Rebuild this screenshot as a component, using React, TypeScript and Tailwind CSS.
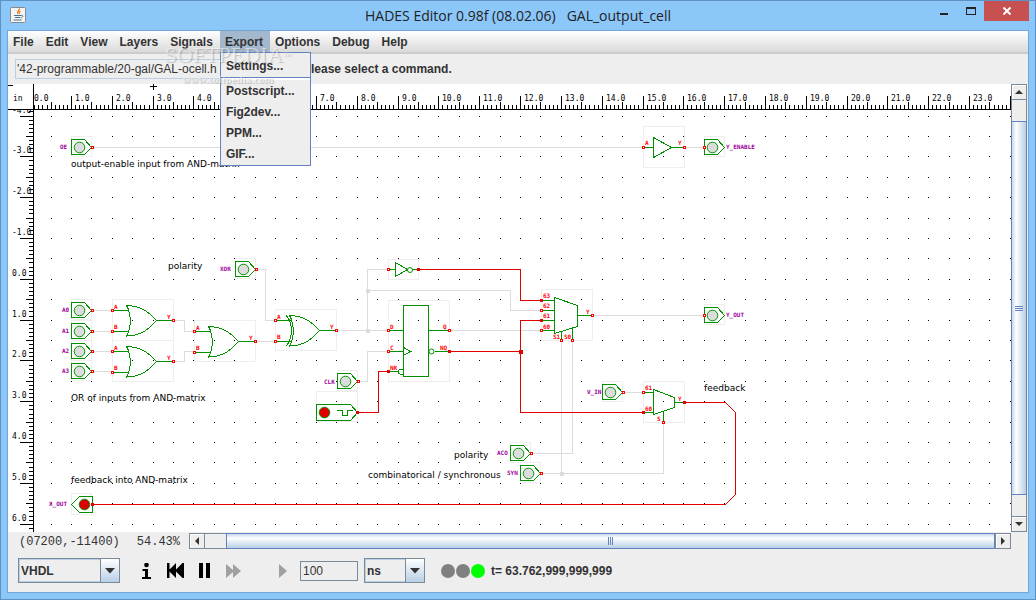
import React, { useState } from 'react';

const MENUS = ['File', 'Edit', 'View', 'Layers', 'Signals', 'Export', 'Options', 'Debug', 'Help'];
const EXPORT_ITEMS = ['Postscript...', 'Fig2dev...', 'PPM...', 'GIF...'];

const GREEN = '#009000';
const LOW = '#dcdcdc';
const HIGH = '#e00000';

// grid: one inch is 40.82px at 54.43% zoom
const gx = (u: number) => Math.floor(30.7 + 40.82 * u);
const gy = (u: number) => Math.floor(279.3 + 40.82 * u);
const range = (from: number, to: number) =>
  Array.from({ length: to - from + 1 }, (_, i) => from + i);

function Grid() {
  return (
    <g fill="#000">
      {range(-8, 12).map((r) =>
        range(1, 48).map((c) => (
          <rect key={`${r}:${c}`} x={gx(c / 2)} y={gy(r / 2)} width="1" height="1" />
        )),
      )}
    </g>
  );
}

function Rulers() {
  return (
    <g fill="#000" fontFamily='"DejaVu Sans Mono", monospace' fontSize="8">
      {range(-41, 61).map((t) => {
        const w = t % 10 === 0 ? 13 : t % 5 === 0 ? 7 : 4;
        return <rect key={t} x={33 - w} y={gy(t / 10)} width={w} height="1" />;
      })}
      {range(-4, 6).map((n) => (
        <text key={n} x="12" y={gy(n) - 3}>
          {n.toFixed(1)}
        </text>
      ))}
      <rect x="8" y="84" width="1020" height="25" fill="#fff" />
      {range(1, 240).map((t) => {
        const h = t % 10 === 0 ? 13 : t % 5 === 0 ? 7 : 4;
        return <rect key={t} x={gx(t / 10)} y={109 - h} width="1" height={h} />;
      })}
      {range(0, 23).map((n) => (
        <text key={n} x={gx(n) + 4} y="101">
          {n.toFixed(1)}
        </text>
      ))}
      <text x="13" y="101">
        in
      </text>
      <rect x="8" y="109" width="1020" height="1" />
      <rect x="33" y="84" width="1" height="460" />
      <rect x="8" y="85" width="5" height="1" />
      <rect x="150" y="86" width="7" height="1" />
      <rect x="153" y="84" width="1" height="6" />
    </g>
  );
}

function Bounds({ x, y, w, h }: { x: number; y: number; w: number; h: number }) {
  return <rect x={x + 0.5} y={y + 0.5} width={w} height={h} fill="none" stroke="#eee" />;
}

function Port({ x, y, high }: { x: number; y: number; high?: boolean }) {
  return (
    <rect
      x={x - 0.5}
      y={y - 0.5}
      width="2"
      height="2"
      fill={high ? '#f00' : '#fff'}
      stroke={high ? '#e00000' : '#f00'}
    />
  );
}

function Wire({ d, high }: { d: string; high?: boolean }) {
  return <path d={d} fill="none" stroke={high ? HIGH : LOW} />;
}

function Junction({ x, y, high }: { x: number; y: number; high?: boolean }) {
  return <rect x={x - 1} y={y - 1} width="4" height="4" fill={high ? HIGH : LOW} />;
}

function Pin({ x, y, children }: { x: number; y: number; children: string }) {
  return (
    <text x={x} y={y} fill="#f00" fontSize="6" fontWeight="bold">
      {children}
    </text>
  );
}

function Name({ x, y, children }: { x: number; y: number; children: string }) {
  return (
    <text x={x} y={y} fill="#a000a0" fontSize="6" fontWeight="bold">
      {children}
    </text>
  );
}

function Lamp({ x, y, fill }: { x: number; y: number; fill: string }) {
  return <circle cx={x} cy={y} r="5.3" fill={fill} stroke={GREEN} shapeRendering="auto" />;
}

/** Input or output connector; x is its left edge, y its centre line. */
function Pad({ x, y, out }: { x: number; y: number; out?: boolean }) {
  return (
    <g>
      <Bounds x={x} y={y - 11} w={20} h={20} />
      <path d={`M${x + 0.5} ${y - 7.5}h13l7 8l-7 7h-13z`} fill="#fff" stroke={GREEN} />
      <Lamp x={x + 8.5} y={y + 0.5} fill={LOW} />
      <Port x={out ? x : x + 21} y={y} />
    </g>
  );
}

function OrGate({ x, y, xor }: { x: number; y: number; xor?: boolean }) {
  return (
    <g fill="none" stroke={GREEN}>
      <Bounds x={x} y={y - 21} w={61} h={41} />
      <path
        d={`M${x + 14.5} ${y - 14.5}C${x + 29} ${y - 14} ${x + 37} ${y - 8} ${x + 44.5} ${y + 0.5}C${x + 37} ${y + 9} ${x + 29} ${y + 16} ${x + 14.5} ${y + 16}C${x + 19.5} ${y + 8} ${x + 19.5} ${y - 6} ${x + 14.5} ${y - 14.5}`}
      />
      {xor && <path d={`M${x + 11} ${y - 14.5}q5 4 5.5 15q-.5 11 -5.5 15.5`} />}
      <path d={`M${x} ${y - 9.5}h16M${x} ${y + 11.5}h16M${x + 44} ${y + 0.5}h17`} />
      <Port x={x} y={y - 10} />
      <Port x={x} y={y + 11} />
      <Port x={x + 61} y={y} />
      <g stroke="none">
        <Pin x={x + 2} y={y - 11}>A</Pin>
        <Pin x={x + 2} y={y + 9}>B</Pin>
        <Pin x={x + 55} y={y - 1}>Y</Pin>
      </g>
    </g>
  );
}

function Gates() {
  return (
    <g fill="none" stroke={GREEN}>
      <OrGate x={112} y={320} />
      <OrGate x={112} y={361} />
      <OrGate x={194} y={341} />
      <OrGate x={275} y={330} xor />

      {/* output-enable buffer */}
      <Bounds x={643} y={126} w={41} h={41} />
      <path d="M643 147.5h10.5M653.5 137.5v20l18 -10zM671 147.5h13" />
      {/* inverter */}
      <Bounds x={388} y={259} w={30} h={20} />
      <path d="M388 269.5h7M395.5 262.5v14l12 -7zM413 269.5h5" />
      <circle cx="410" cy="270" r="2.5" shapeRendering="auto" />

      {/* flip-flop */}
      <Bounds x={388} y={300} w={61} h={81} />
      <rect x="403.5" y="305.5" width="25" height="71" />
      <path d="M388 330.5h15M388 351.5h15M388 371.5h10M428 330.5h21M435 351.5h14" />
      <path d="M403.5 347.5l7 4l-7 4M403 369q-5 0 -5 2.5q0 3 5 3" />
      <circle cx="431.5" cy="351.5" r="2.5" fill="#fff" shapeRendering="auto" />

      {/* reset pulse source */}
      <Bounds x={316} y={391} w={41} h={30} />
      <path d="M316.5 404.5h34l7 8l-7 8h-34z" fill="#fff" />
      <Lamp x={324.5} y={412.5} fill={HIGH} />
      <path d="M337 410.5h5.5v5h5v-5h5.5" />

      {/* output multiplexer */}
      <Bounds x={541} y={289} w={51} h={51} />
      <path d="M554.5 297.5l23 8v21l-23 7zM541 300.5h13M541 310.5h13M541 320.5h13M541 330.5h13" />
      <path d="M577 315.5h15M561.5 331v9M572.5 328v12" />

      {/* feedback multiplexer */}
      <Bounds x={643} y={381} w={41} h={41} />
      <path d="M653.5 389.5l21 8v10l-21 7zM643 392.5h10M643 412.5h10M674 402.5h10M663.5 412v10" />
    </g>
  );
}

function Wires() {
  return (
    <g>
      <Wire d="M92 147.5H643M684 147.5H704" />
      <Wire d="M92 310.5H112M92 331.5H112M92 351.5H112M92 371.5H112" />
      <Wire d="M173 320.5H184.5V331.5H194M173 361.5H184.5V351.5H194M256 341.5H275" />
      <Wire d="M256 269.5H265.5V320.5H275M337 330.5H388M367.5 330.5V269.5H388" />
      <Wire d="M367.5 290.5H510.5V310.5H541M449 330.5H541M358 381.5H367.5V351.5H388" />
      <Wire d="M592 315.5H704M561.5 340V473.5M572.5 340V453.5H531" />
      <Wire d="M541 473.5H663.5V422M623 392.5H643" />
      <Wire high d="M418 269.5H520.5V300.5H541M449 351.5H520.5M541 320.5H520.5V412.5H643" />
      <Wire high d="M357 412.5H378.5V371.5H388" />
      <Wire high d="M684 402.5H725.5L735.5 412.5V494.5L725.5 504.5H92" />
      <Junction x={367} y={290} />
      <Junction x={367} y={330} />
      <Junction x={561} y={473} />
      <Junction x={520} y={351} high />
    </g>
  );
}

function Labels() {
  return (
    <g>
      <Name x={60} y={149}>OE</Name>
      <Name x={62} y={312}>A0</Name>
      <Name x={62} y={333}>A1</Name>
      <Name x={62} y={353}>A2</Name>
      <Name x={62} y={373}>A3</Name>
      <Name x={220} y={271}>XOR</Name>
      <Name x={324} y={384}>CLK</Name>
      <Name x={497} y={455}>ACO</Name>
      <Name x={507} y={475}>SYN</Name>
      <Name x={587} y={394}>V_IN</Name>
      <Name x={726} y={317}>Y_OUT</Name>
      <Name x={726} y={149}>Y_ENABLE</Name>
      <Name x={49} y={506}>X_OUT</Name>
      <Pin x={645} y={145}>A</Pin>
      <Pin x={678} y={145}>Y</Pin>
      <Pin x={390} y={329}>D</Pin>
      <Pin x={390} y={350}>C</Pin>
      <Pin x={390} y={370}>NR</Pin>
      <Pin x={443} y={329}>Q</Pin>
      <Pin x={440} y={350}>NQ</Pin>
      <Pin x={543} y={298}>63</Pin>
      <Pin x={543} y={308}>62</Pin>
      <Pin x={543} y={318}>61</Pin>
      <Pin x={543} y={329}>60</Pin>
      <Pin x={553} y={339}>S1</Pin>
      <Pin x={564} y={339}>S0</Pin>
      <Pin x={586} y={314}>Y</Pin>
      <Pin x={645} y={390}>61</Pin>
      <Pin x={645} y={411}>60</Pin>
      <Pin x={657} y={421}>S</Pin>
      <Pin x={678} y={401}>Y</Pin>
    </g>
  );
}

const PADS = [
  [71, 147], [71, 310], [71, 331], [71, 351], [71, 371], [235, 269],
  [337, 381], [510, 453], [520, 473], [602, 392],
];
const HIGH_PORTS = [
  [92, 504], [418, 269], [388, 371], [357, 412], [541, 300], [541, 320],
  [449, 351], [643, 412], [684, 402],
];
const LOW_PORTS = [
  [643, 147], [684, 147], [388, 269], [388, 330], [388, 351], [449, 330], [541, 310],
  [541, 330], [592, 315], [561, 340], [572, 340], [643, 392], [663, 422],
];

function Schematic() {
  return (
    <svg className="block h-full w-full bg-white" role="img" aria-label="GAL output cell schematic">
      <g transform="translate(-8 -84)" fontFamily='"DejaVu Sans Mono", monospace' shapeRendering="crispEdges">
        <Grid />
        <Wires />
        <Gates />
        {PADS.map(([x, y]) => (
          <Pad key={`${x}:${y}`} x={x} y={y} />
        ))}
        <Pad x={704} y={147} out />
        <Pad x={704} y={315} out />
        <Bounds x={71} y={493} w={20} h={21} />
        <path d="M92.5 496.5h-13l-8 8l8 8h13z" fill="#fff" stroke={GREEN} />
        <Lamp x={84.5} y={504.5} fill={HIGH} />
        {HIGH_PORTS.map(([x, y]) => (
          <Port key={`${x}:${y}`} x={x} y={y} high />
        ))}
        {LOW_PORTS.map(([x, y]) => (
          <Port key={`${x}:${y}`} x={x} y={y} />
        ))}
        <Labels />
        <g fontFamily='"DejaVu Sans", sans-serif' fontSize="9">
          <text x="71" y="167">output-enable input from AND-matrix</text>
          <text x="168" y="269">polarity</text>
          <text x="71" y="401">OR of inputs from AND-matrix</text>
          <text x="704" y="391">feedback</text>
          <text x="454" y="458">polarity</text>
          <text x="368" y="478">combinatorical / synchronous</text>
          <text x="71" y="483">feedback into AND-matrix</text>
        </g>
        <Rulers />
      </g>
    </svg>
  );
}

function JavaIcon() {
  return (
    <svg width="16" height="16" viewBox="0 0 16 16" fill="none">
      <rect x=".5" y=".5" width="15" height="15" rx="1" fill="#f4f4f4" stroke="#8a8a8a" />
      <path d="M9.5 1.5c.5 2-3.500 2.500-1.500 5.500M10.500 4c-2 1-1.500 1.500-1 3" stroke="#e8761a" strokeWidth="1.2" />
      <path d="M4 8.500h7M5 10.500h5M3.500 13h8M11 8.500c3-.5 2 2-.5 2.500" stroke="#4a7390" />
    </svg>
  );
}

function ArrowIcon({ dir }: { dir: 'up' | 'down' | 'left' | 'right' }) {
  const d = {
    up: 'M0 6L4 2L8 6z',
    down: 'M0 2L4 6L8 2z',
    left: 'M6 0L2 4L6 8z',
    right: 'M2 0L6 4L2 8z',
  }[dir];
  return (
    <svg width="8" height="8" viewBox="0 0 8 8" fill="#333">
      <path d={d} />
    </svg>
  );
}

function ScrollButton({ dir }: { dir: 'up' | 'down' | 'left' | 'right' }) {
  return (
    <button
      aria-label={`Scroll ${dir}`}
      className="flex h-4 w-4 shrink-0 items-center justify-center border border-[#7a8a99] bg-[#eee] shadow-[inset_1px_1px_0_#fff]"
    >
      <ArrowIcon dir={dir} />
    </button>
  );
}

function Combo({ label, options, className }: { label: string; options: string[]; className: string }) {
  return (
    <div className={`relative h-[25px] ${className}`}>
      <select
        aria-label={label}
        className="h-full w-full appearance-none border border-[#7a8a99] bg-[#eee] pl-[2px] text-xs font-bold shadow-[inset_0_0_0_1px_#b8cfe5]"
      >
        {options.map((o) => (
          <option key={o}>{o}</option>
        ))}
      </select>
      <span className="pointer-events-none absolute inset-y-0 right-0 flex w-5 items-center justify-center border border-[#7a8a99] bg-linear-to-b from-white to-[#b8cfe5]">
        <svg width="10" height="6" viewBox="0 0 10 6" fill="#333">
          <path d="M0 0h10L5 5.5z" />
        </svg>
      </span>
    </div>
  );
}

function MenuBar({ open, onToggle }: { open: string | null; onToggle: (m: string) => void }) {
  return (
    <nav className="flex h-[23px] shrink-0 border-b-2 border-[#ccc] bg-linear-to-b from-white to-[#dadada] text-xs font-bold">
      {MENUS.map((m) => (
        <div key={m} className="relative h-[22px]">
          <button
            onClick={() => onToggle(m)}
            className={open === m ? 'h-full bg-[#a3b8cc] pr-[7px] pl-[5px]' : 'h-full pr-[7px] pl-[5px]'}
          >
            {m}
          </button>
          {m === 'Export' && open === m && (
            <div className="absolute top-[21px] left-0 z-10 flex w-[91px] flex-col border border-[#6382bf] bg-[#eee] pb-px">
              <button className="h-[25px] border-b border-[#6382bf] px-[5px] pt-px text-left">Settings...</button>
              <div className="h-[2px] bg-white" />
              {EXPORT_ITEMS.map((it) => (
                <button key={it} className="h-[21px] px-[5px] text-left">
                  {it}
                </button>
              ))}
            </div>
          )}
        </div>
      ))}
    </nav>
  );
}

function Toolbar() {
  return (
    <div className="flex h-[43px] shrink-0 items-center pl-[10px] text-xs font-bold">
      <Combo label="Language" options={['VHDL', 'Verilog']} className="w-[102px]" />
      <div className="ml-3 flex items-center">
        <button aria-label="Info" className="flex w-[29px] justify-center">
          <svg width="11" height="16" viewBox="0 0 11 16">
            <circle cx="5.5" cy="2" r="2.3" />
            <path d="M1.5 6h5.5v8h3v2h-9v-2h3v-6h-2.500z" />
          </svg>
        </button>
        <button aria-label="Rewind" className="flex w-[29px] justify-center">
          <svg width="17" height="15" viewBox="0 0 17 15">
            <path d="M0 0h2.500v6.500L9 0v6.500L15.500 0H17v15h-1.500L9 8.500V15L2.500 8.500V15H0z" />
          </svg>
        </button>
        <button aria-label="Pause" className="flex w-[29px] justify-center">
          <svg width="11" height="15" viewBox="0 0 11 15">
            <path d="M0 0h4v15H0zM7 0h4v15H7z" />
          </svg>
        </button>
        <button aria-label="Fast forward" className="flex w-[29px] justify-center">
          <svg width="15" height="14" viewBox="0 0 15 14" fill="#a0a0a0">
            <path d="M0 0l7 6V0l8 7l-8 7V8l-7 6z" />
          </svg>
        </button>
        <button aria-label="Step" className="ml-5 flex w-[29px] justify-center">
          <svg width="8" height="14" viewBox="0 0 8 14" fill="#a0a0a0">
            <path d="M0 0l8 7l-8 7z" />
          </svg>
        </button>
      </div>
      <input
        aria-label="Run time"
        defaultValue="100"
        className="ml-[3px] h-5 w-[58px] border border-[#7a8a99] bg-[#eee] pl-[2px] font-normal"
      />
      <Combo label="Time unit" options={['ns', 'us', 'ms']} className="ml-[6px] w-[61px]" />
      <svg className="ml-4 shrink-0" width="45" height="14" viewBox="0 0 45 14">
        <circle cx="7" cy="7" r="7" fill="#808080" />
        <circle cx="22" cy="7" r="7" fill="#808080" />
        <circle cx="37" cy="7" r="7" fill="#0f0" />
      </svg>
      <output className="ml-[5px] whitespace-nowrap">t= 63.762,999,999,999</output>
    </div>
  );
}

export default function App() {
  const [menu, setMenu] = useState<string | null>('Export');
  return (
    <div className="flex h-screen flex-col border border-[#5f92c4] bg-[#8cc7fa] px-[6px] pb-[6px] font-['Liberation_Sans',Arial,sans-serif] text-[#333]">
      <header className="relative flex h-[29px] shrink-0 items-center justify-center">
        <div className="absolute top-[6px] left-[3px]">
          <JavaIcon />
        </div>
        <h1 className="font-['Open_Sans','Noto_Sans',sans-serif] text-[14px] leading-[28px] whitespace-pre text-[#222]">
          {'HADES Editor 0.98f (08.02.06)   GAL_output_cell'}
        </h1>
        <div className="absolute top-0 right-0 flex h-5 items-center">
          <button aria-label="Minimize" className="flex h-5 w-[27px] items-center justify-center">
            <svg width="8" height="8" viewBox="0 0 8 8">
              <path d="M0 6h8v2H0z" fill="#222" />
            </svg>
          </button>
          <button aria-label="Maximize" className="flex h-5 w-[27px] items-center justify-center">
            <svg width="10" height="8" viewBox="0 0 10 8">
              <path d="M0 0h10v8H0zM1 2v5h8V2z" fill="#222" fillRule="evenodd" />
            </svg>
          </button>
          <button aria-label="Close" className="flex h-5 w-[45px] items-center justify-center bg-[#c75050]">
            <svg width="8" height="8" viewBox="0 0 8 8">
              <path d="M.5.5l7 7M7.5.5l-7 7" stroke="#fff" strokeWidth="2" />
            </svg>
          </button>
        </div>
      </header>

      <main className="relative flex min-h-0 flex-1 flex-col border border-[#73a6d8] bg-[#eee]">
        <MenuBar open={menu} onToggle={(m) => setMenu(menu === m ? null : m)} />
        <div className="flex h-[30px] shrink-0 items-center gap-[7px] pl-[7px] text-xs">
          <input
            aria-label="Design file"
            defaultValue="'42-programmable/20-gal/GAL-ocell.h"
            className="h-5 w-[281px] border border-[#b8cfe5] bg-[#eee] px-px text-xs"
          />
          <p className="font-bold">Please select a command.</p>
        </div>

        <div className="flex min-h-0 flex-1">
          <div className="min-w-0 flex-1 overflow-hidden">
            <Schematic />
          </div>
          <div className="flex w-[17px] flex-col">
            <ScrollButton dir="up" />
            <div className="h-[21px] w-4 border-x border-[#7a8a99]" />
            <div className="w-4 flex-1 border border-[#6382bf] bg-linear-to-r from-[#c8d8ea] via-white via-30% to-[#b8cfe5]">
              <div className="flex h-full flex-col items-center justify-center gap-px">
                <i className="h-px w-2 bg-[#6382bf]" />
                <i className="h-px w-2 bg-[#6382bf]" />
                <i className="h-px w-2 bg-[#6382bf]" />
              </div>
            </div>
            <div className="h-[21px] w-4 border-x border-[#7a8a99]" />
            <ScrollButton dir="down" />
          </div>
        </div>

        <div className="flex h-[17px] shrink-0 items-center pr-[17px]">
          <div className="flex w-[181px] shrink-0 justify-between pt-[3px] pr-[9px] pl-[11px] font-['Liberation_Mono',monospace] text-xs">
            <span>(07200,-11400)</span>
            <span>54.43%</span>
          </div>
          <ScrollButton dir="left" />
          <div className="h-4 w-[21px] border-y border-[#7a8a99]" />
          <div className="flex h-4 flex-1 items-center justify-center gap-px border border-[#6382bf] bg-linear-to-b from-[#c8d8ea] via-white via-30% to-[#b8cfe5]">
            <i className="h-2 w-px bg-[#6382bf]" />
            <i className="h-2 w-px bg-[#6382bf]" />
            <i className="h-2 w-px bg-[#6382bf]" />
          </div>
          <ScrollButton dir="right" />
        </div>

        <Toolbar />

        <div className="pointer-events-none absolute top-2 left-[155px] z-20 flex w-[130px] flex-col items-center gap-[2px] font-['Liberation_Serif',serif] text-white/50">
          <p className="text-[22px] leading-[32px] [text-shadow:1px_1px_1px_#0003]">
            SOFTPEDIA<sup className="text-[8px]">™</sup>
          </p>
          <p className="text-[11px] leading-[12px] font-bold [text-shadow:1px_1px_1px_#0003]">www.softpedia.com</p>
        </div>
      </main>
    </div>
  );
}
